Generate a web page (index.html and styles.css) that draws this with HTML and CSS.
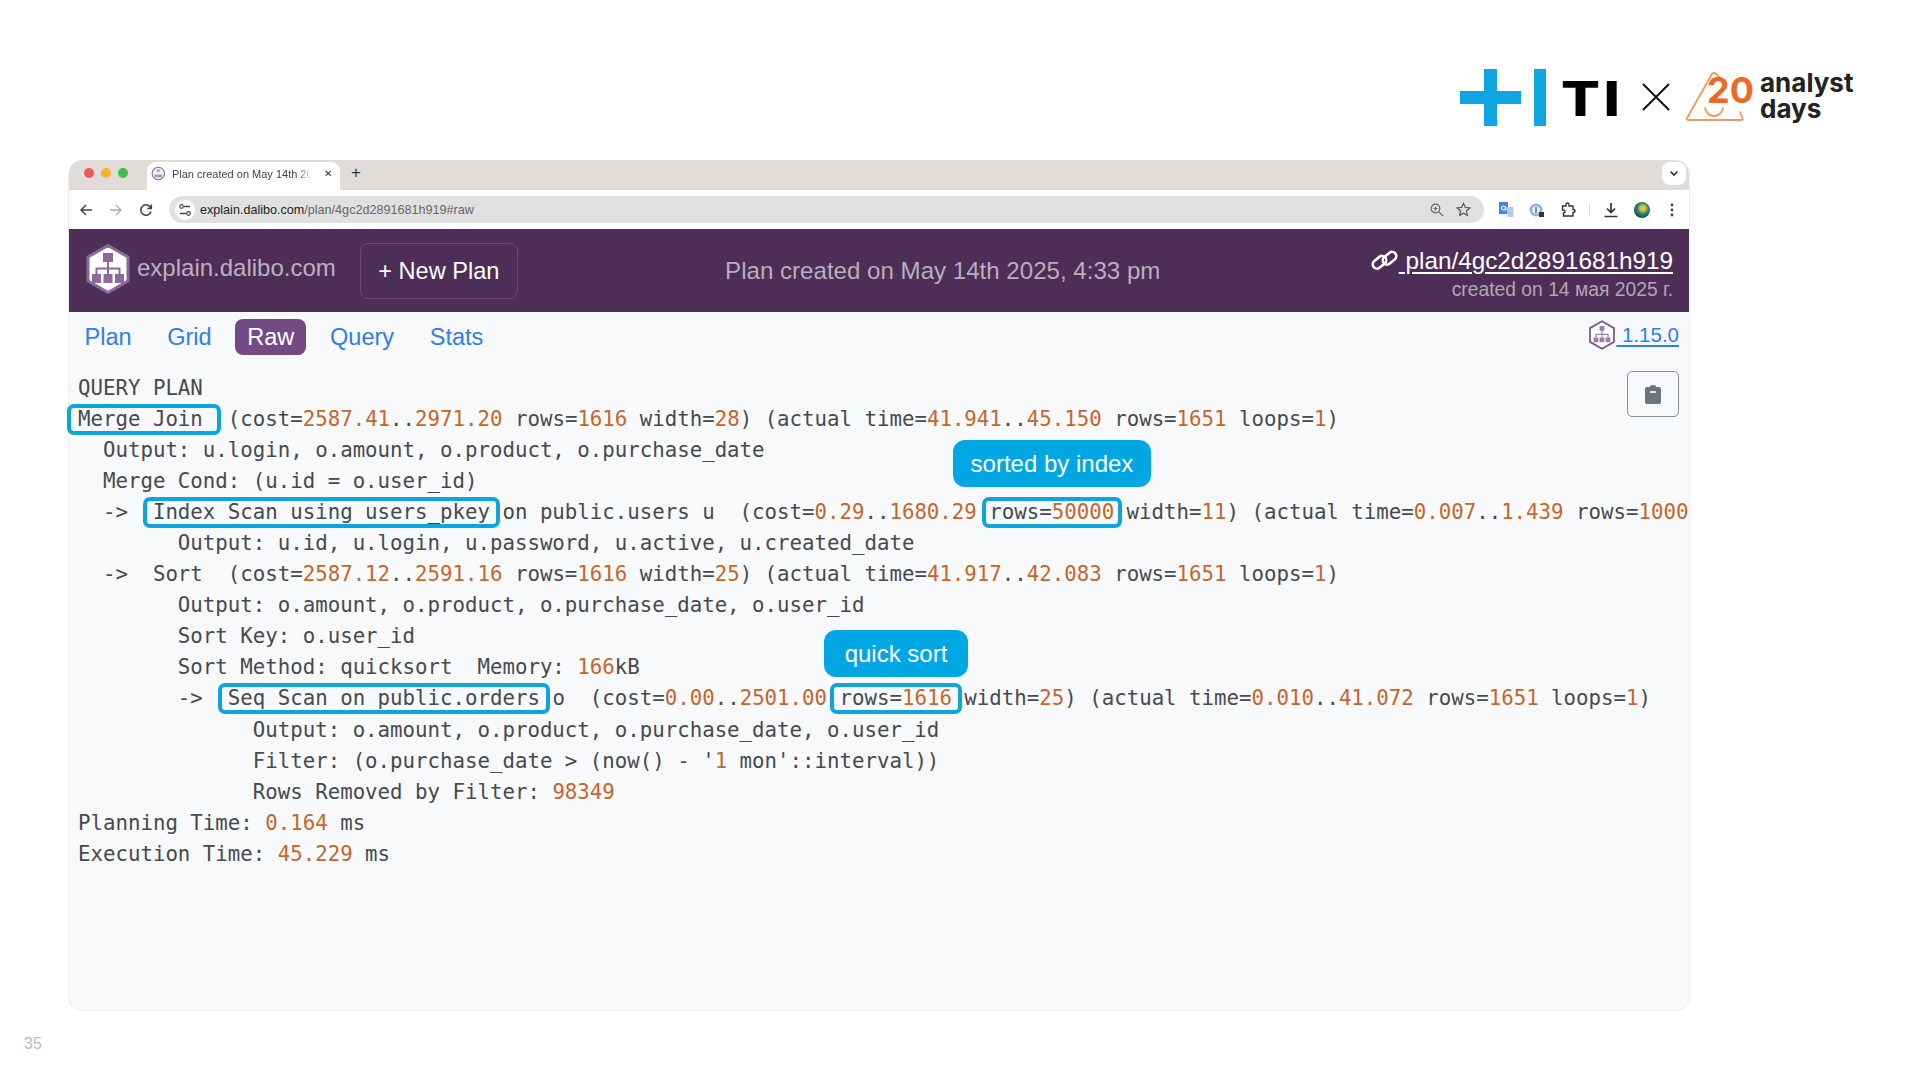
FILE: index.html
```html
<!DOCTYPE html>
<html lang="en">
<head>
<meta charset="utf-8">
<title>Plan created on May 14th 2025, 4:33 pm</title>
<link rel="stylesheet" href="styles.css">
</head>
<body>
<div class="slide">
  <div class="brand">
    <svg class="brand-plus" width="86" height="57" viewBox="0 0 86 57"><path fill="#0ea5e0" d="M24 0h13v22h24v13H37v22H24V35H0V22h24zM74 0h12v57H74z"/></svg>
    <span class="brand-ti">TI</span>
    <svg class="brand-x" width="28" height="28" viewBox="0 0 28 28"><path d="M1 1l26 26M27 1L1 27" stroke="#111" stroke-width="2" fill="none"/></svg>
    <svg class="brand-20" width="68" height="52" viewBox="0 0 68 52"><path d="M26 2L1 46q-1 2 2 2h52q3 0 1-3l-2-5M26 2q2-2 4 0l5 5M19 36q2 8 9 8t9-8" fill="none" stroke="#ef9a62" stroke-width="1.8" stroke-linecap="round"/><text x="21" y="31" class="brand-20-text">20</text></svg>
    <div class="brand-days">analyst<br>days</div>
  </div>

  <div class="window">
    <div class="tabstrip">
      <div class="lights"><i class="light red"></i><i class="light yellow"></i><i class="light green"></i></div>
      <div class="tab">
        <svg width="15" height="15" viewBox="0 0 16 16"><circle cx="8" cy="8" r="6.8" fill="#f4eff6" stroke="#8b6a9a" stroke-width="1.2"/><path d="M6.6 3.6h2.800v2.400H6.600zM4 9.500h8v2.600H4z" fill="#a78db3"/></svg>
        <span class="tab-title">Plan created on May 14th 2025</span>
        <span class="tab-close">✕</span>
      </div>
      <span class="tab-new">+</span>
      <span class="tab-chevron"><svg width="10" height="7" viewBox="0 0 10 7"><path d="M1.500 1.500L5 5l3.500-3.500" fill="none" stroke="#333" stroke-width="1.600"/></svg></span>
    </div>

    <div class="toolbar">
      <svg width="14" height="14" viewBox="0 0 14 14"><path d="M13 7H2M7 2L2 7l5 5" fill="none" stroke="#444" stroke-width="1.500"/></svg>
      <svg width="14" height="14" viewBox="0 0 14 14"><path d="M1 7h11M7 2l5 5-5 5" fill="none" stroke="#aaa" stroke-width="1.300"/></svg>
      <svg width="14" height="14" viewBox="0 0 14 14"><path d="M11.800 5A5.200 5.200 0 1 0 12 8.500M12.300 1.500v4h-4" fill="none" stroke="#444" stroke-width="1.600"/></svg>
      <div class="urlbar">
        <span class="url-tune"><svg width="14" height="14" viewBox="0 0 14 14"><path d="M6 3.500h6M2 10.500h6" stroke="#444" stroke-width="1.300"/><circle cx="3.500" cy="3.500" r="1.800" fill="none" stroke="#444" stroke-width="1.200"/><circle cx="10.500" cy="10.500" r="1.800" fill="none" stroke="#444" stroke-width="1.200"/></svg></span>
        <span class="url-text"><b>explain.dalibo.com</b>/plan/4gc2d2891681h919#raw</span>
        <svg width="14" height="14" viewBox="0 0 14 14"><circle cx="5.500" cy="5.500" r="4.300" fill="none" stroke="#666" stroke-width="1.200"/><path d="M8.800 8.800L13 13M3.500 5.500h4M5.500 3.500v4" stroke="#666" stroke-width="1.200"/></svg>
        <svg width="15" height="15" viewBox="0 0 16 16"><path d="M8 1.500l2 4.300 4.700.600-3.500 3.200.9 4.700L8 12l-4.100 2.300.9-4.700L1.300 6.400 6 5.800z" fill="none" stroke="#555" stroke-width="1.300"/></svg>
      </div>
      <div class="ext">
        <svg width="16" height="18" viewBox="0 0 16 18"><path d="M1 1h9v12H1z" fill="#4285e8"/><path d="M8 6h7.500v10H10z" fill="#b9cbe3"/><circle cx="5.500" cy="7" r="2" fill="none" stroke="#fff" stroke-width="1.200"/></svg>
        <svg width="16" height="16" viewBox="0 0 16 16"><circle cx="7" cy="8" r="6.500" fill="#8fb6dc"/><circle cx="7" cy="8" r="3.800" fill="#e8f0f8"/><path d="M6.300 5h1.400v6H6.300z" fill="#2f6ea8"/><path d="M10 10h5v5h-5z" fill="#333"/></svg>
        <svg width="16" height="16" viewBox="0 0 16 16"><path d="M2.500 4H6V2.500q0-1.500 1.500-1.500T9 2.500V4h4v3.500q2 0 2 1.500t-2 1.500V14H3.500v-3Q5 11 5 9.500T2.500 8z" fill="none" stroke="#333" stroke-width="1.400"/></svg>
        <i class="ext-sep"></i>
        <svg width="16" height="16" viewBox="0 0 16 16"><path d="M8 1v9M4 6.500L8 10.500l4-4M1.500 14.500h13" fill="none" stroke="#333" stroke-width="1.700"/></svg>
        <i class="avatar"></i>
        <svg class="ext-dots" width="4" height="14" viewBox="0 0 4 14"><circle cx="2" cy="2" r="1.400" fill="#444"/><circle cx="2" cy="7" r="1.400" fill="#444"/><circle cx="2" cy="12" r="1.400" fill="#444"/></svg>
      </div>
    </div>

    <header class="app-head">
      <div class="app-left">
        <svg class="app-logo" width="46" height="50" viewBox="0 0 46 50"><path d="M23 1.500l20 11.500v24L23 48.500 3 37V13z" fill="#fff" stroke="#8a6a98" stroke-width="3"/><path d="M18 9h10v9h-10zM7 30h9v9H7zM18.500 30h9v9h-9zM30 30h9v9h-9z" fill="#8a6a98"/><path d="M23 18v12M11.500 30v-5.500h23V30" fill="none" stroke="#8a6a98" stroke-width="2"/></svg>
        <span class="app-name">explain.dalibo.com</span>
        <button class="new-plan">+ New Plan</button>
      </div>
      <div class="app-title">Plan created on May 14th 2025, 4:33 pm</div>
      <div class="app-right">
        <a class="plan-link"><svg width="28" height="22" viewBox="0 0 28 22"><g fill="none" stroke="#fff" stroke-width="2.600"><rect x="1" y="8" width="15" height="8.500" rx="4.250" transform="rotate(-40 8.500 12.250)"/><rect x="11" y="4" width="15" height="8.500" rx="4.250" transform="rotate(-40 18.500 8.250)"/></g></svg> plan/4gc2d2891681h919</a>
        <div class="plan-date">created on 14 мая 2025 г.</div>
      </div>
    </header>

    <nav class="app-nav">
      <a class="nav-item">Plan</a>
      <a class="nav-item">Grid</a>
      <a class="nav-item active">Raw</a>
      <a class="nav-item">Query</a>
      <a class="nav-item">Stats</a>
      <a class="version"><svg width="28" height="30" viewBox="0 0 46 50"><path d="M23 2l20 11.500v23L23 48 3 36.500v-23z" fill="#fff" stroke="#7b5a8c" stroke-width="3"/><path d="M19 10h8v8h-8zM9 29h8v8H9zM19 29h8v8h-8zM29 29h8v8h-8z" fill="#9c7ba9"/><path d="M23 18v11M13 29v-5h20v5" fill="none" stroke="#9c7ba9" stroke-width="2"/></svg><span> 1.15.0</span></a>
    </nav>

    <main class="plan-body">
      <button class="copy"><svg width="16" height="20" viewBox="0 0 16 20"><path d="M5 3V2.500Q5 1 8 1t3 1.500V3h3q2 0 2 2v13q0 2-2 2H2q-2 0-2-2V5q0-2 2-2z" fill="#6c757d"/><path d="M5 8h6" stroke="#fff" stroke-width="1.600"/></svg></button>
<pre class="plan-text">QUERY PLAN
<span class="box box-merge">Merge Join</span>  (cost=<span class="n">2587.41</span>..<span class="n">2971.20</span> rows=<span class="n">1616</span> width=<span class="n">28</span>) (actual time=<span class="n">41.941</span>..<span class="n">45.150</span> rows=<span class="n">1651</span> loops=<span class="n">1</span>)
  Output: u.login, o.amount, o.product, o.purchase_date
  Merge Cond: (u.id = o.user_id)
  -&gt;  <span class="box">Index Scan using users_pkey</span> on public.users u  (cost=<span class="n">0.29</span>..<span class="n">1680.29</span> <span class="box box-rows">rows=<span class="n">50000</span></span> width=<span class="n">11</span>) (actual time=<span class="n">0.007</span>..<span class="n">1.439</span> rows=<span class="n">1000</span> loops=<span class="n">1</span>)
        Output: u.id, u.login, u.password, u.active, u.created_date
  -&gt;  Sort  (cost=<span class="n">2587.12</span>..<span class="n">2591.16</span> rows=<span class="n">1616</span> width=<span class="n">25</span>) (actual time=<span class="n">41.917</span>..<span class="n">42.083</span> rows=<span class="n">1651</span> loops=<span class="n">1</span>)
        Output: o.amount, o.product, o.purchase_date, o.user_id
        Sort Key: o.user_id
        Sort Method: quicksort  Memory: <span class="n">166</span>kB
        -&gt;  <span class="box">Seq Scan on public.orders</span> o  (cost=<span class="n">0.00</span>..<span class="n">2501.00</span> <span class="box">rows=<span class="n">1616</span></span> width=<span class="n">25</span>) (actual time=<span class="n">0.010</span>..<span class="n">41.072</span> rows=<span class="n">1651</span> loops=<span class="n">1</span>)
              Output: o.amount, o.product, o.purchase_date, o.user_id
              Filter: (o.purchase_date &gt; (now() - '<span class="n">1</span> mon'::interval))
              Rows Removed by Filter: <span class="n">98349</span>
Planning Time: <span class="n">0.164</span> ms
Execution Time: <span class="n">45.229</span> ms</pre>
      <div class="callout callout-index">sorted by index</div>
      <div class="callout callout-sort">quick sort</div>
    </main>
  </div>

  <div class="page-num">35</div>
</div>
</body>
</html>
```
FILE: styles.css
```css
* { box-sizing: border-box; }
html, body { margin: 0; padding: 0; background: #fff; }
body { font-family: "Liberation Sans", Arial, sans-serif; }
.slide { width: 1920px; height: 1080px; overflow: hidden; display: flex; flex-direction: column; }

/* brand row */
.brand { height: 160px; padding: 69px 67px 0 0; display: flex; justify-content: flex-end; align-items: flex-start; }
.brand-ti { width: 55.500px; margin-left: 14.500px; margin-top: 1px; font: 800 48px/57px Inter, sans-serif; color: #000; letter-spacing: 3px; white-space: nowrap; transform: scaleX(1.2); transform-origin: left center; }
.brand-x { margin: 14px 0 0 26px; }
.brand-20 { margin: 3px 0 0 16px; overflow: visible; }
.brand-20-text { font: 700 36px Inter, sans-serif; fill: #ea6b26; letter-spacing: 0; }
.brand-days { width: 93px; margin-left: 6px; margin-top: 1px; font: 700 26px/26px Inter, sans-serif; color: #222; }

/* window */
.window { width: 1622px; height: 851px; margin-left: 68px; border-radius: 14px; border: 1px solid #eceef0; border-top: 0; background: #f8f9fa; display: flex; flex-direction: column; }

.tabstrip { height: 30px; background: #e2dcd9; border-radius: 14px 14px 0 0; display: flex; align-items: flex-end; padding-left: 15px; }
.lights { display: flex; gap: 7px; align-self: center; width: 63px; margin-bottom: 4px; }
.light { width: 10px; height: 10px; border-radius: 50%; }
.red { background: #ee5b56; }
.yellow { background: #f3b32e; }
.green { background: #3fc04f; }
.tab { width: 193px; height: 28px; background: #fff; border-radius: 9px 9px 0 0; display: flex; align-items: center; padding: 0 8px 5px 4px; gap: 6.300px; }
.tab-title { width: 143px; overflow: hidden; white-space: nowrap; font-size: 11px; color: #444; -webkit-mask-image: linear-gradient(90deg, #000 90%, transparent); mask-image: linear-gradient(90deg, #000 90%, transparent); }
.tab-close { font-size: 10px; color: #333; margin-left: 6px; }
.tab-new { align-self: center; margin-left: 11px; margin-bottom: 4px; font-size: 17px; color: #333; }
.tab-chevron { margin-left: auto; margin-right: 3px; align-self: center; margin-bottom: 4px; width: 24px; height: 23px; background: #fff; border-radius: 8px; display: flex; align-items: center; justify-content: center; }

.toolbar { height: 39px; background: #fff; display: flex; align-items: center; gap: 16px; padding-left: 10px; }
.urlbar { width: 1315px; height: 27px; background: #e0e0e0; border-radius: 14px; display: flex; align-items: center; padding: 0 13px 0 6px; gap: 12px; }
.url-tune { width: 20px; height: 20px; border-radius: 50%; background: #fff; display: flex; align-items: center; justify-content: center; }
.url-text { flex: 1; margin-left: -7px; font-size: 12.600px; color: #666; white-space: nowrap; }
.url-text b { font-weight: 400; color: #222; }
.ext { display: flex; align-items: center; gap: 14.800px; margin-left: -2px; }
.ext-sep { width: 1px; height: 14px; margin: 0 -2px 0 -1px; background: #ddd; }
.avatar { width: 16px; height: 16px; border-radius: 50%; background: radial-gradient(circle at 55% 40%, #d8c341 0 20%, #2f8f6a 40%, #1d3c6b 75%); }
.ext-dots { margin-left: 5px; }

/* app header */
.app-head { height: 83px; background: #4c2e56; display: flex; align-items: center; padding: 0 16px 0 16px; }
.app-left { display: flex; align-items: center; }
.app-logo { margin-top: -3px; }
.app-name { margin-left: 6px; margin-top: -5px; font-size: 24px; color: #bdb0c2; }
.new-plan { width: 158px; height: 56px; margin-left: 24px; padding: 2px 0 0; background: transparent; border: 1px solid #644a6e; border-radius: 8px; color: #fff; font: 23.600px "Liberation Sans", sans-serif; }
.app-title { flex: 1; text-align: center; margin-right: 3px; font-size: 24.100px; color: #b9adbf; }
.app-right { text-align: right; padding-top: 7px; }
.plan-link { display: block; font-size: 24.300px; line-height: 28px; color: #fff; text-decoration: underline; text-underline-offset: 3px; white-space: nowrap; }
.plan-link svg { vertical-align: -3px; }
.plan-date { margin-top: 4px; font-size: 19.300px; line-height: 22px; color: #b2a6b8; }

/* nav */
.app-nav { height: 59px; display: flex; align-items: flex-start; padding: 7px 10px 0 3.500px; font-size: 23.500px; }
.nav-item { height: 36px; line-height: 36px; padding: 0 12px; margin-right: 11.700px; border-radius: 8px; color: #2e7fe6; }
.nav-item.active { background: #744a85; color: #fff; }
.version { margin-left: auto; margin-top: -1px; display: flex; align-items: center; height: 34px; font-size: 20.500px; color: #2e7fe6; text-decoration: underline; text-underline-offset: 3px; white-space: pre; }

/* plan */
.plan-body { flex: 1; min-height: 0; position: relative; padding: 3px 0 0 9px; clip-path: inset(0 0 0 -6px); }
.plan-text { margin: -1.500px 0 0; font: 20.740px/31.100px "DejaVu Sans Mono", monospace; color: #454a4f; white-space: pre; }
.n { color: #c4662e; }
.box { position: relative; }
.box::after { content: ""; position: absolute; left: -10px; right: -10px; top: -3px; bottom: -4px; border: 4px solid #0ea5dc; border-radius: 7px; }
.box-merge::after { left: -11px; right: -18px; }
.box-rows::after { left: -7px; right: -8px; }
.copy { position: absolute; right: 10px; top: 0; width: 52px; height: 46px; background: transparent; border: 1px solid #868e96; border-radius: 5px; display: flex; align-items: center; justify-content: center; padding: 0; }
.callout { position: absolute; height: 47px; line-height: 47px; text-align: center; border-radius: 12px; background: #00a7e3; color: #fff; font-size: 24px; }
.callout-index { left: 884px; top: 69px; width: 198px; }
.callout-sort { left: 755px; top: 259px; width: 144px; }

.page-num { margin: 24px 0 0 24px; font-size: 16px; line-height: 18px; color: #bbb; }
```
